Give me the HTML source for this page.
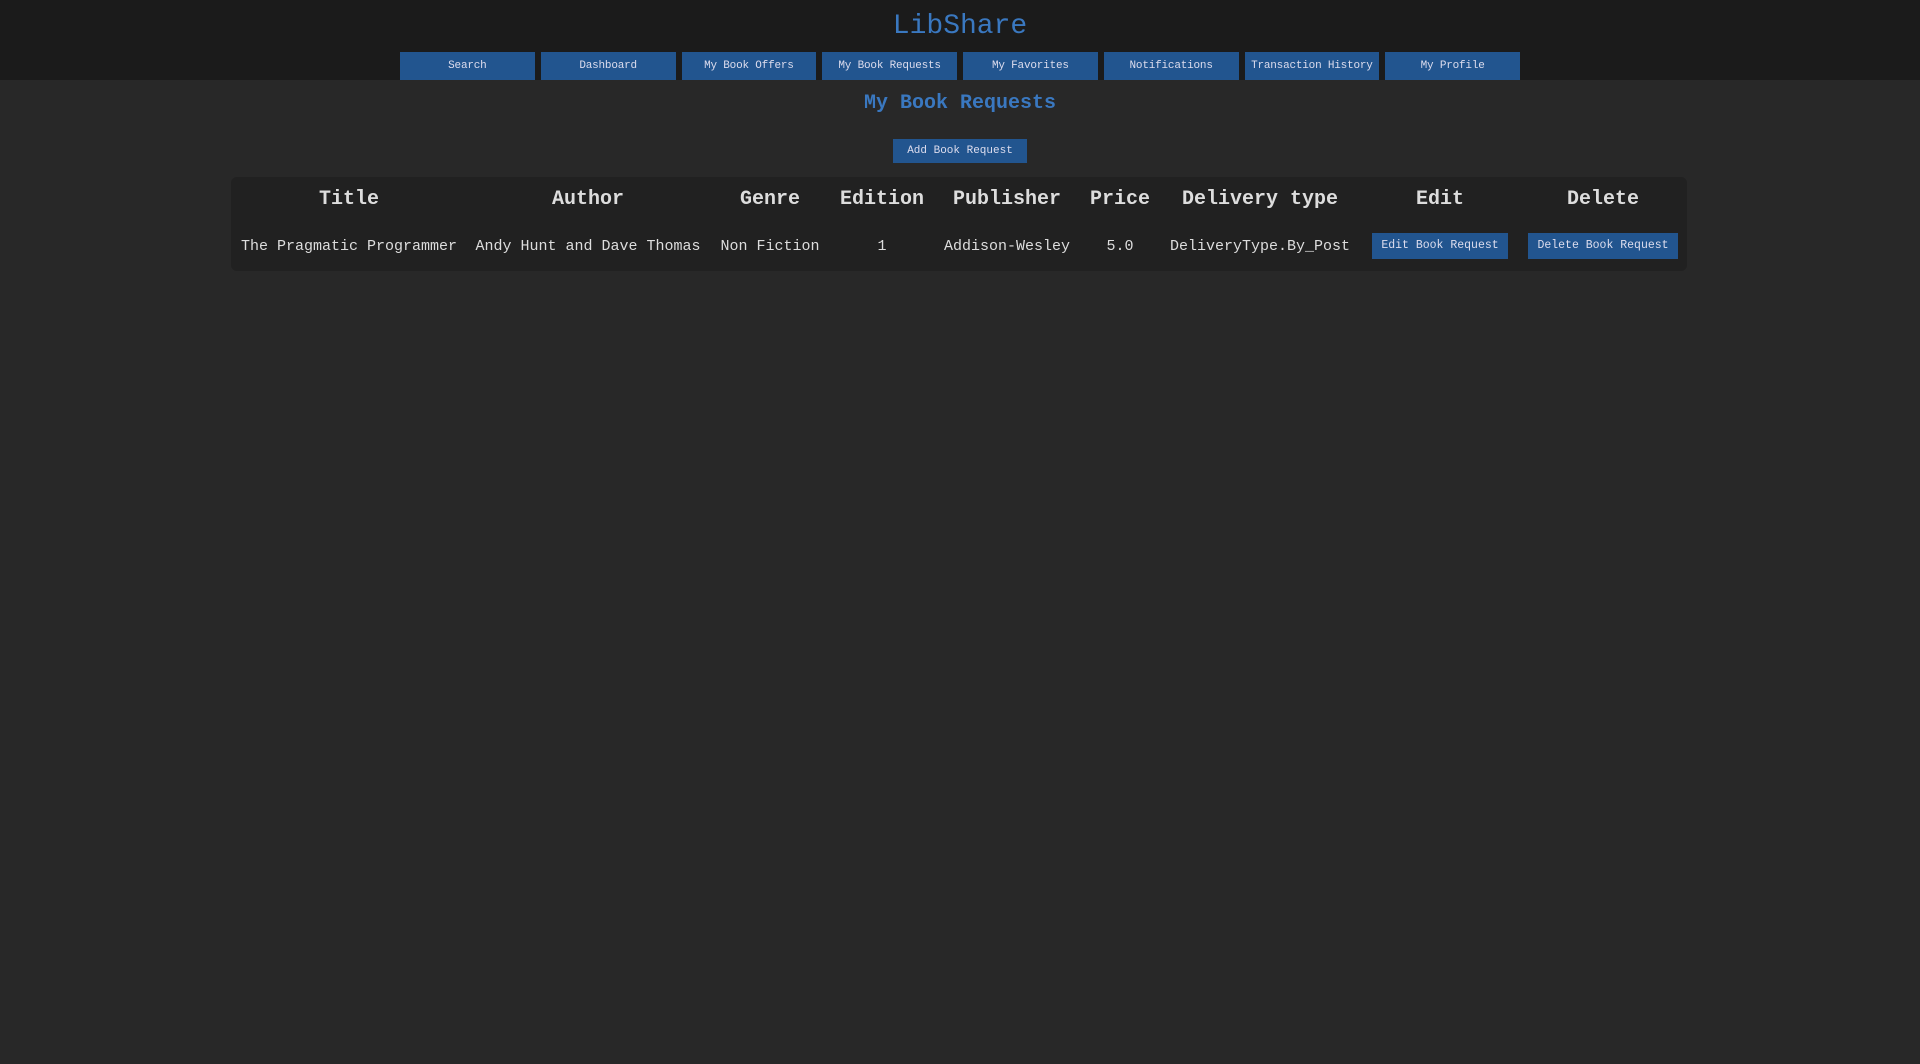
<!DOCTYPE html>
<html><head><meta charset="utf-8"><style>
html,body{margin:0;padding:0}
body{width:1920px;height:1064px;background:#282828;font-family:"Liberation Mono",monospace;color:#ddd;overflow:hidden}
.hdr{background:#1b1b1b;height:80px;position:relative}
.logo{position:absolute;top:7px;left:0;width:1920px;text-align:center;font-size:28px;color:#3a78c0;line-height:40px}
.nav{position:absolute;top:52px;left:397px;width:1126px;height:28px;display:flex}
.nav div{flex:1;background:#22558f;margin:0 3px;color:#dde;font-size:11px;text-align:center;line-height:28px;letter-spacing:-0.2px}
h1{margin:0;position:absolute;top:90px;width:1920px;text-align:center;font-size:20px;color:#3a78c0;line-height:28px}
.add{position:absolute;left:893px;top:139px;width:134px;height:24px;background:#22558f;color:#dde;font-size:11px;text-align:center;line-height:24px}
table{position:absolute;left:231px;top:177px;width:1456px;border-collapse:collapse;background:#212121;table-layout:fixed;border-radius:6px}
th{font-size:20px;height:44px;padding:0;font-weight:bold;color:#ddd}
td{font-size:15px;text-align:center;height:50px;padding:0;color:#ddd;vertical-align:middle}
.b{display:inline-block;background:#22558f;color:#dde;font-size:11.5px;height:26px;line-height:26px;padding:0 9px}
</style></head><body>
<div class="hdr"><div class="logo">LibShare</div>
<div class="nav"><div>Search</div><div>Dashboard</div><div>My Book Offers</div><div>My Book Requests</div><div>My Favorites</div><div>Notifications</div><div>Transaction History</div><div>My Profile</div></div></div>
<h1>My Book Requests</h1>
<div class="add">Add Book Request</div>
<table>
<colgroup><col style="width:236px"><col style="width:242px"><col style="width:122px"><col style="width:102px"><col style="width:148px"><col style="width:78px"><col style="width:202px"><col style="width:158px"><col style="width:168px"></colgroup>
<tr><th>Title</th><th>Author</th><th>Genre</th><th>Edition</th><th>Publisher</th><th>Price</th><th>Delivery type</th><th>Edit</th><th>Delete</th></tr>
<tr><td>The Pragmatic Programmer</td><td>Andy Hunt and Dave Thomas</td><td>Non Fiction</td><td>1</td><td>Addison-Wesley</td><td>5.0</td><td>DeliveryType.By_Post</td><td><span class="b">Edit Book Request</span></td><td><span class="b">Delete Book Request</span></td></tr>
</table>
</body></html>
